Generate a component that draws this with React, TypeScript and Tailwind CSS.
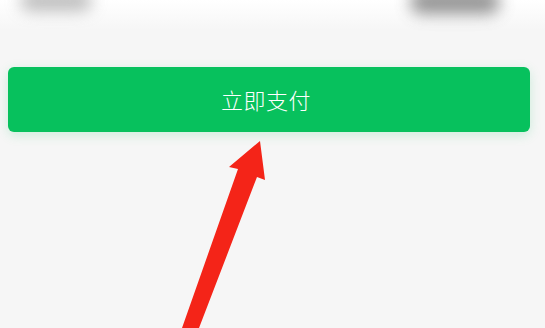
export default function App() {
  return (
    <div className="relative w-[545px] h-[328px] overflow-hidden bg-[#f6f6f6] font-['Noto_Sans_CJK_SC',sans-serif]">
      {/* top strip: cut-off blurred controls */}
      <div className="h-[30px] bg-gradient-to-b from-white to-[#f6f6f6] flex justify-between px-[20px]">
        <div className="w-[72px] h-[20px] -mt-[9px] rounded-full bg-[#a0a0a0] blur-[8px] opacity-70" />
        <div className="w-[90px] h-[24px] -mt-[10px] mr-[25px] rounded-full bg-[#7a7a7a] blur-[8px] opacity-80" />
      </div>

      <div className="pl-[8px] pr-[15px] pt-[37px]">
        <button className="w-full h-[65px] pr-[6px] rounded-[6px] bg-[#07c15d] text-white text-[22px] font-light tracking-[0.5px] shadow-[0_3px_12px_rgba(7,193,96,0.18)] flex items-center justify-center">
          立即支付
        </button>
      </div>

      {/* red annotation arrow */}
      <svg className="absolute left-0 top-0" width="545" height="328" viewBox="0 0 545 328">
        <path
          d="M182 328 L238 169 L229 167 L260 141 L265 180 L257 177 L199 328 Z"
          fill="#f42418"
        />
      </svg>
    </div>
  );
}
